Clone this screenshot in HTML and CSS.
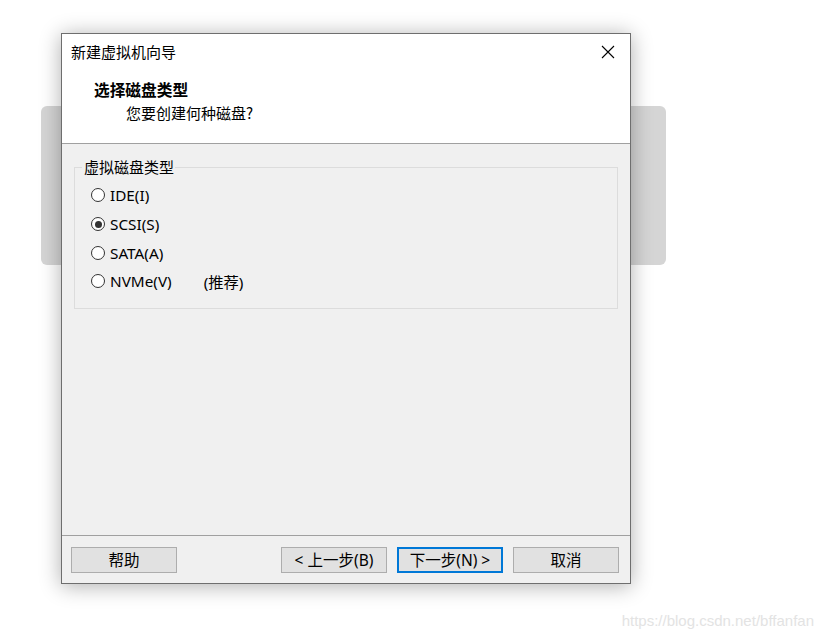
FILE: index.html
```html
<!DOCTYPE html>
<html lang="zh-CN">
<head>
<meta charset="utf-8">
<title>新建虚拟机向导</title>
<link rel="stylesheet" href="styles.css">
</head>
<body>
<div class="desktop">
  <div class="backcard"></div>
  <div class="window">
    <div class="top">
      <div class="titlebar">
        <span class="title">新建虚拟机向导</span>
        <span class="close">
          <svg width="14" height="14" viewBox="0 0 14 14"><path d="M1 1 L13 13 M13 1 L1 13" stroke="#000" stroke-width="1.1" fill="none"/></svg>
        </span>
      </div>
      <div class="header">
        <div class="h-title">选择磁盘类型</div>
        <div class="h-sub">您要创建何种磁盘?</div>
      </div>
    </div>
    <div class="body">
      <fieldset class="group">
        <legend class="group-label">虚拟磁盘类型</legend>
        <div class="options">
          <div class="opt"><span class="radio"></span><span class="lbl">IDE(I)</span></div>
          <div class="opt"><span class="radio checked"></span><span class="lbl">SCSI(S)</span></div>
          <div class="opt"><span class="radio"></span><span class="lbl">SATA(A)</span></div>
          <div class="opt"><span class="radio"></span><span class="lbl">NVMe(V)</span><span class="rec">(推荐)</span></div>
        </div>
      </fieldset>
    </div>
    <div class="footer">
      <button class="btn">帮助</button>
      <button class="btn push">&lt; 上一步(B)</button>
      <button class="btn primary">下一步(N) &gt;</button>
      <button class="btn">取消</button>
    </div>
  </div>
  <div class="watermark">https://blog.csdn.net/bffanfan</div>
</div>
</body>
</html>
```
FILE: styles.css
```css
html, body {
  margin: 0;
  padding: 0;
  background: #ffffff;
}
.desktop {
  position: relative;
  width: 823px;
  height: 639px;
  overflow: hidden;
  font-family: "Noto Sans", "Noto Sans CJK SC", sans-serif;
  font-size: 15px;
  color: #000;
}
.backcard {
  position: absolute;
  left: 41px;
  top: 106px;
  width: 625px;
  height: 159px;
  background: #d5d5d5;
  border-radius: 6px;
}
.window {
  position: absolute;
  left: 61px;
  top: 33px;
  width: 568px;
  height: 549px;
  border: 1px solid #6e6e6e;
  background: #f0f0f0;
  box-shadow: 0 2px 20px rgba(0,0,0,0.32);
  display: flex;
  flex-direction: column;
}
.top {
  background: #ffffff;
  border-bottom: 1px solid #a0a0a0;
  height: 110px;
  box-sizing: border-box;
}
.titlebar {
  height: 36px;
  display: flex;
  align-items: center;
  justify-content: space-between;
  padding: 0 15px 0 9px;
}
.title {
  font-family: "Noto Sans CJK SC", sans-serif;
  font-size: 15px;
  line-height: 20px;
}
.close {
  display: flex;
  width: 14px;
  height: 14px;
}
.header {
  padding: 9px 0 0 32px;
}
.h-title {
  font-family: "Noto Sans CJK SC", sans-serif;
  font-weight: bold;
  font-size: 15.7px;
  line-height: 22px;
}
.h-sub {
  font-family: "Noto Sans CJK SC", sans-serif;
  font-size: 15px;
  line-height: 23px;
  padding-left: 32px;
}
.body {
  flex: 1;
  padding: 13px 12px 0 12px;
}
.group {
  margin: 0;
  border: 1px solid #dcdcdc;
  padding: 0 0 16px 7px;
  min-width: 0;
  height: 152px;
  box-sizing: border-box;
}
.group-label {
  padding: 0 1px 0 2px;
  font-family: "Noto Sans CJK SC", sans-serif;
  font-size: 15px;
  line-height: 20px;
}
.options {
  padding-left: 9px;
  padding-top: 4px;
}
.opt {
  height: 28.7px;
  display: flex;
  align-items: center;
}
.radio {
  width: 14px;
  height: 14px;
  box-sizing: border-box;
  border: 1px solid #333333;
  border-radius: 50%;
  background: #ffffff;
  margin-right: 5px;
  position: relative;
  flex: none;
}
.radio.checked::after {
  content: "";
  position: absolute;
  left: 2.5px;
  top: 2.5px;
  width: 7px;
  height: 7px;
  border-radius: 50%;
  background: #333333;
}
.lbl {
  line-height: 20px;
  font-size: 15.3px;
}
.rec {
  margin-left: 32px;
  font-family: "Noto Sans", "Noto Sans CJK SC", sans-serif;
  font-size: 15.3px;
}
.footer {
  height: 48px;
  box-sizing: border-box;
  border-top: 1px solid #a0a0a0;
  display: flex;
  gap: 10px;
  padding: 11px 11px 0 9px;
  align-items: flex-start;
}
.btn {
  width: 106px;
  height: 26px;
  box-sizing: border-box;
  border: 1px solid #adadad;
  background: #e1e1e1;
  font-family: "Noto Sans", "Noto Sans CJK SC", sans-serif;
  font-size: 15.5px;
  color: #000;
  padding: 0;
  line-height: 22px;
}
.btn.push {
  margin-left: auto;
}
.btn.primary {
  border: 2px solid #0078d7;
}
.watermark {
  position: absolute;
  right: 9px;
  top: 611px;
  font-family: "Liberation Sans", Arial, sans-serif;
  font-size: 15px;
  color: #e3e3e3;
  line-height: 20px;
}
```
